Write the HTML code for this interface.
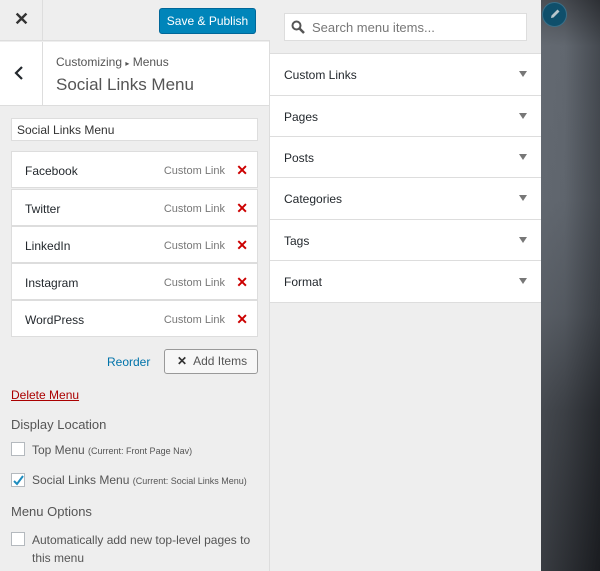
<!DOCTYPE html>
<html><head><meta charset="utf-8"><style>
*{box-sizing:border-box;margin:0;padding:0}
body{width:600px;height:571px;overflow:hidden;position:relative;font-family:"Liberation Sans",sans-serif;background:#eee;color:#555}
.a{position:absolute}
.l{left:0;top:0;width:270px;height:571px;background:#eee;border-right:1px solid #ddd}
.row{position:absolute;left:11px;width:247px;height:37px;background:#fff;border:1px solid #ddd;font-size:12px;color:#23282d}
.row .n{position:absolute;left:13px;top:12px}
.row .c{position:absolute;right:32px;top:13px;color:#777;font-size:11px}
.row .x{position:absolute;right:9px;top:10px;color:#c00;font-size:14px;font-weight:bold}
.sec{position:absolute;left:270px;width:271px;background:#fff;border-bottom:1px solid #ddd;font-size:12px;color:#23282d}
.sec span{position:absolute;left:14px;top:14px}
.sec i{position:absolute;right:14px;top:17px;width:0;height:0;border-left:4px solid transparent;border-right:4px solid transparent;border-top:6px solid #777}
.cb{position:absolute;left:11px;width:14px;height:14px;border:1px solid #b4b9be;background:#fff}
</style></head><body>
<div class="a l"></div>
<div class="a" style="left:0;top:0;width:270px;height:41px;background:#eee;border-bottom:1px solid #ddd"></div>
<div class="a" style="left:42px;top:0;width:1px;height:41px;background:#ddd"></div>
<div class="a" style="left:14px;top:9px;font-size:18px;color:#333;font-weight:bold">✕</div>
<div class="a" style="left:159px;top:8px;width:97px;height:26px;background:#0085ba;border:1px solid #006799;border-radius:3px;color:#fff;font-size:12px;text-align:center;line-height:24px">Save &amp; Publish</div>
<div class="a" style="left:0;top:42px;width:269px;height:64px;background:#fff;border-bottom:1px solid #ddd"></div>
<div class="a" style="left:42px;top:42px;width:1px;height:64px;background:#ddd"></div>
<svg class="a" style="left:14px;top:66px" width="10" height="14"><path d="M8 1 L2 7 L8 13" stroke="#23282d" stroke-width="2.2" fill="none"/></svg>
<div class="a" style="left:56px;top:55px;font-size:12px;color:#555">Customizing <span style="font-size:8px">▸</span> Menus</div>
<div class="a" style="left:56px;top:75px;font-size:17px;color:#555">Social Links Menu</div>
<div class="a" style="left:11px;top:118px;width:247px;height:23px;background:#fff;border:1px solid #ddd;font-size:12px;color:#333;padding:4px 5px">Social Links Menu</div>
<div class="row" style="top:151px"><span class="n">Facebook</span><span class="c">Custom Link</span><span class="x">✕</span></div>
<div class="row" style="top:189px"><span class="n">Twitter</span><span class="c">Custom Link</span><span class="x">✕</span></div>
<div class="row" style="top:226px"><span class="n">LinkedIn</span><span class="c">Custom Link</span><span class="x">✕</span></div>
<div class="row" style="top:263px"><span class="n">Instagram</span><span class="c">Custom Link</span><span class="x">✕</span></div>
<div class="row" style="top:300px"><span class="n">WordPress</span><span class="c">Custom Link</span><span class="x">✕</span></div>
<div class="a" style="left:107px;top:355px;font-size:12px;color:#0073aa">Reorder</div>
<div class="a" style="left:164px;top:349px;width:94px;height:25px;border:1px solid #999;border-radius:3px;background:#f7f7f7;font-size:12px;color:#555;line-height:23px;padding-left:12px"><b style="color:#333;font-size:12px">✕</b>&nbsp; Add Items</div>
<div class="a" style="left:11px;top:388px;font-size:12px;color:#a00;text-decoration:underline">Delete Menu</div>
<div class="a" style="left:11px;top:417px;font-size:13px;color:#555">Display Location</div>
<div class="cb" style="top:442px"></div>
<div class="a" style="left:32px;top:443px;font-size:12px;color:#555">Top Menu <span style="font-size:9px">(Current: Front Page Nav)</span></div>
<div class="cb" style="top:473px"></div>
<svg class="a" style="left:12px;top:474px" width="13" height="13"><path d="M2 7 L5 10 L11 2" stroke="#1e8cbe" stroke-width="2" fill="none"/></svg>
<div class="a" style="left:32px;top:473px;font-size:12px;color:#555">Social Links Menu <span style="font-size:9px">(Current: Social Links Menu)</span></div>
<div class="a" style="left:11px;top:504px;font-size:13px;color:#555">Menu Options</div>
<div class="cb" style="top:532px"></div>
<div class="a" style="left:32px;top:531px;font-size:12px;color:#555;line-height:18px;width:230px">Automatically add new top-level pages to this menu</div>

<div class="a" style="left:270px;top:0;width:271px;height:54px;background:#eee;border-bottom:1px solid #ddd"></div>
<div class="a" style="left:284px;top:13px;width:243px;height:28px;background:#fff;border:1px solid #ddd;font-size:13px;color:#777;padding:6px 0 0 27px">Search menu items...</div>
<svg class="a" style="left:291px;top:20px" width="14" height="14"><circle cx="5.5" cy="5.5" r="4" stroke="#555" stroke-width="2" fill="none"/><path d="M8.5 8.5 L13 13" stroke="#555" stroke-width="2.5"/></svg>
<div class="sec" style="top:54px;height:42px"><span>Custom Links</span><i></i></div>
<div class="sec" style="top:96px;height:41px"><span>Pages</span><i></i></div>
<div class="sec" style="top:137px;height:41px"><span>Posts</span><i></i></div>
<div class="sec" style="top:178px;height:42px"><span>Categories</span><i></i></div>
<div class="sec" style="top:220px;height:41px"><span>Tags</span><i></i></div>
<div class="sec" style="top:261px;height:42px"><span>Format</span><i></i></div>
<div class="a" style="left:541px;top:0;width:59px;height:571px;background:linear-gradient(180deg,#3a3d42 0%,#5e646c 8%,#5b6169 35%,#4c5158 55%,#2f3237 72%,#1d1f23 100%)"></div>
<div class="a" style="left:541px;top:0;width:59px;height:571px;background:linear-gradient(90deg,rgba(110,116,124,.35) 0%,rgba(110,116,124,.2) 40%,rgba(20,22,26,.35) 100%)"></div>
<div class="a" style="left:542px;top:2px;width:25px;height:25px;border-radius:50%;background:#0f4f6b;border:1px solid #3a6f88"></div>
<svg class="a" style="left:548px;top:7px" width="14" height="14"><path d="M3 11 L3.5 8.5 L9.5 2.5 L11.5 4.5 L5.5 10.5 Z" fill="#b9c6cc"/></svg>
</body></html>
